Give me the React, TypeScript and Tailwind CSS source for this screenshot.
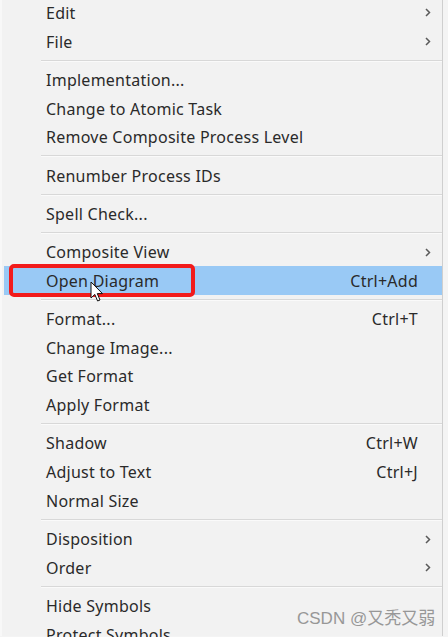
import React from "react";

type Item =
  | { kind: "sep" }
  | { kind: "item"; label: string; shortcut?: string; sub?: boolean; active?: boolean };

const items: Item[] = [
  { kind: "item", label: "Edit", sub: true },
  { kind: "item", label: "File", sub: true },
  { kind: "sep" },
  { kind: "item", label: "Implementation..." },
  { kind: "item", label: "Change to Atomic Task" },
  { kind: "item", label: "Remove Composite Process Level" },
  { kind: "sep" },
  { kind: "item", label: "Renumber Process IDs" },
  { kind: "sep" },
  { kind: "item", label: "Spell Check..." },
  { kind: "sep" },
  { kind: "item", label: "Composite View", sub: true },
  { kind: "item", label: "Open Diagram", shortcut: "Ctrl+Add", active: true },
  { kind: "sep" },
  { kind: "item", label: "Format...", shortcut: "Ctrl+T" },
  { kind: "item", label: "Change Image..." },
  { kind: "item", label: "Get Format" },
  { kind: "item", label: "Apply Format" },
  { kind: "sep" },
  { kind: "item", label: "Shadow", shortcut: "Ctrl+W" },
  { kind: "item", label: "Adjust to Text", shortcut: "Ctrl+J" },
  { kind: "item", label: "Normal Size" },
  { kind: "sep" },
  { kind: "item", label: "Disposition", sub: true },
  { kind: "item", label: "Order", sub: true },
  { kind: "sep" },
  { kind: "item", label: "Hide Symbols" },
  { kind: "item", label: "Protect Symbols" },
];

function Chevron() {
  return (
    <svg width="6" height="9" viewBox="0 0 6 9" className="block">
      <polyline points="1,1 4.5,4.5 1,8" fill="none" stroke="#5a5a5a" strokeWidth="1.5" />
    </svg>
  );
}

function Cursor() {
  return (
    <svg width="14" height="22" viewBox="0 0 14 22" className="block">
      <path
        d="M1 1 L1 17 L4.8 13.4 L7.6 20 L10 19 L7.3 12.6 L12.5 12.6 Z"
        fill="#ffffff"
        stroke="#111111"
        strokeWidth="1"
        strokeLinejoin="round"
      />
    </svg>
  );
}

export default function App() {
  return (
    <div className="w-[448px] h-[637px] overflow-hidden bg-[#f4f4f4] relative font-['Noto_Sans',sans-serif]">
      <div className="w-[443px] h-full bg-[#f2f2f2] border-r border-[#cfcfcf] border-l-2 border-l-[#f8f8f8] pl-[2px]">
        <div className="-mt-[1.4px] flex flex-col">
          {items.map((it, i) =>
            it.kind === "sep" ? (
              <div key={i} className="h-[9.6px] flex items-center pl-[37px]">
                <div className="w-full border-t border-[#d8d8d8] border-b border-b-[#fafafa]" />
              </div>
            ) : (
              <div
                key={i}
                className={`relative h-[28.7px] flex items-center pl-[42px] text-[16px] tracking-[0.25px] text-[#2a2a2a] ${
                  it.active ? "bg-[#99c9f5]" : ""
                }`}
              >
                <span className="flex-1 whitespace-nowrap">{it.label}</span>
                {it.shortcut && <span className="whitespace-nowrap">{it.shortcut}</span>}
                <span className="w-[24px] flex items-center pl-[7px]">{it.sub && <Chevron />}</span>
                {it.active && (
                  <>
                    <div className="absolute left-[5px] top-[-2.5px] w-[186px] h-[33px] border-[4px] border-[#f21b1b] rounded-[5px]" />
                    <div className="absolute left-[86px] top-[15px]">
                      <Cursor />
                    </div>
                  </>
                )}
              </div>
            )
          )}
        </div>
      </div>
      <div className="absolute left-[297px] top-[606px] text-[17px] text-[#8e8e8e] font-['Liberation_Sans','Noto_Sans_CJK_SC',sans-serif] whitespace-nowrap opacity-90">
        CSDN @又秃又弱
      </div>
    </div>
  );
}
